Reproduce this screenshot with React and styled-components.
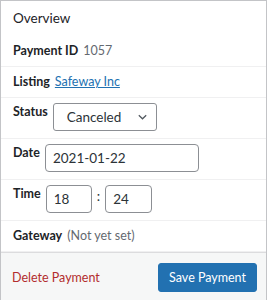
import React from "react";
import styled, { createGlobalStyle } from "styled-components";

const Global = createGlobalStyle`
  html, body { margin: 0; padding: 0; background: #ffffff; }
  body { font-family: Lato, "Noto Sans", Arial, sans-serif; font-size: 12.5px; color: #3c434a; }
  * { box-sizing: border-box; }
`;

const Box = styled.div`
  width: 267px;
  min-height: 300px;
  border: 1px solid #c3c4c7;
  border-bottom: none;
  background: #fff;
  display: flex;
  flex-direction: column;
`;

const Header = styled.h2`
  margin: 0;
  padding: 8px 12px 8px;
  font-size: 13.5px;
  font-weight: 400;
  line-height: 19px;
  color: #1d2327;
`;

const Row = styled.div`
  display: flex;
  align-items: flex-start;
  gap: 5px;
  padding: ${(p) => (p.$control ? "5px 12px 7px" : "6px 12px")};
  line-height: 18px;
  border-bottom: 1px solid #f0f0f1;
`;

const Label = styled.span`
  font-weight: 700;
  color: #1d2327;
`;

const Value = styled.span`
  color: #646970;
`;

const Link = styled.a`
  color: #2271b1;
  text-decoration: underline;
`;

const Select = styled.div`
  width: 104px;
  height: 28px;
  border: 1px solid #8c8f94;
  border-radius: 3px;
  display: flex;
  align-items: center;
  justify-content: space-between;
  padding: 0 9px 0 13px;
  font-size: 13.5px;
  color: #2c3338;
  background: #fff;
`;

const Input = styled.div`
  width: ${(p) => p.$w}px;
  height: 28px;
  border: 1px solid #8c8f94;
  border-radius: 4px;
  display: flex;
  align-items: center;
  padding: 0 7px;
  font-size: 13.5px;
  color: #2c3338;
  background: #fff;
`;

const TimeGroup = styled.div`
  display: flex;
  align-items: center;
  gap: 5px;
`;

const Colon = styled.span`
  font-size: 13.5px;
  color: #2c3338;
  margin-top: -6px;
`;

const Footer = styled.div`
  flex: 1;
  background: #f6f7f7;
  border-top: 1px solid #dcdcde;
  padding: 10px 9px 10px 10px;
  display: flex;
  align-items: flex-start;
  justify-content: space-between;
`;

const DeleteLink = styled.a`
  color: #b32d2e;
  font-size: 12.5px;
  line-height: 29px;
  text-decoration: none;
  padding-left: 1px;
`;

const Button = styled.button`
  height: 29px;
  padding: 0 10px;
  border: 1px solid #2271b1;
  border-radius: 3px;
  background: #2271b1;
  color: #fff;
  font-family: inherit;
  font-size: 12.5px;
  line-height: 27px;
`;

const Chevron = () => (
  <svg width="9" height="6" viewBox="0 0 9 6" fill="none">
    <path d="M0.8 1.2l3.7 3.6 3.7-3.6" stroke="#50575e" strokeWidth="1.2" />
  </svg>
);

export default function App() {
  return (
    <>
      <Global />
      <Box>
        <Header>Overview</Header>
        <Row>
          <Label>Payment ID</Label>
          <Value>1057</Value>
        </Row>
        <Row>
          <Label>Listing</Label>
          <Link href="#">Safeway Inc</Link>
        </Row>
        <Row $control>
          <Label>Status</Label>
          <Select>
            <span>Canceled</span>
            <Chevron />
          </Select>
        </Row>
        <Row $control>
          <Label>Date</Label>
          <Input $w={154}>2021-01-22</Input>
        </Row>
        <Row $control>
          <Label>Time</Label>
          <TimeGroup>
            <Input $w={46}>18</Input>
            <Colon>:</Colon>
            <Input $w={47}>24</Input>
          </TimeGroup>
        </Row>
        <Row>
          <Label>Gateway</Label>
          <Value>(Not yet set)</Value>
        </Row>
        <Footer>
          <DeleteLink href="#">Delete Payment</DeleteLink>
          <Button>Save Payment</Button>
        </Footer>
      </Box>
    </>
  );
}
